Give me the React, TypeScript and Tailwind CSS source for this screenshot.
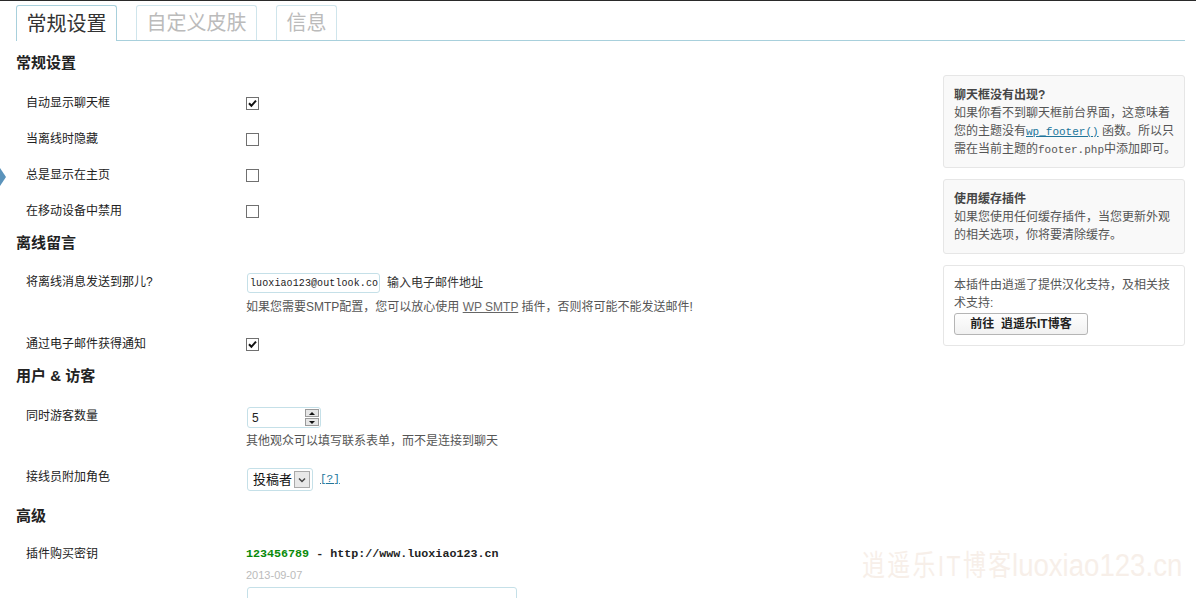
import React from "react";

const CJK = "font-['Liberation_Sans','Noto_Sans_CJK_SC',sans-serif]";
const MONO = "font-['Liberation_Mono','Noto_Sans_CJK_SC',monospace]";

function Checkbox({ checked }: { checked?: boolean }) {
  return (
    <svg width="13" height="13" viewBox="0 0 13 13" className="block">
      <rect x="0.5" y="0.5" width="12" height="12" fill="#fff" stroke="#707070" />
      {checked && (
        <path d="M3 6.3 L5.4 8.8 L10 3.6" fill="none" stroke="#111" strokeWidth="2" />
      )}
    </svg>
  );
}

function CheckRow({ label, checked }: { label: string; checked?: boolean }) {
  return (
    <div className="flex h-[36px] items-center">
      <div className="w-[230px] pl-[10px] text-[12px] leading-[20px] text-[#222]">{label}</div>
      <Checkbox checked={checked} />
    </div>
  );
}

function Heading({ children, h }: { children: React.ReactNode; h: string }) {
  return (
    <div className={`flex items-center ${h} text-[15px] font-bold text-[#222]`}>{children}</div>
  );
}

export default function App() {
  return (
    <div className={`relative h-[598px] w-[1196px] overflow-hidden bg-white ${CJK}`}>
      {/* top bar */}
      <div className="h-[1px] bg-[#2a2a2a]" />

      {/* admin menu arrow */}
      <div className="absolute left-0 top-[168px] h-0 w-0 border-y-[9px] border-l-[6px] border-y-transparent border-l-[#5b93bb]" />

      {/* tabs */}
      <div className="ml-[16px] mr-[11px] flex h-[40px] items-end gap-[19px] border-b border-[#a8d0dc] pt-[4px]">
        <div className="-mb-px flex h-[36px] w-[101px] items-center justify-center rounded-t-[3px] border border-b-0 border-[#a8d0dc] bg-white text-[20px] text-[#333]">
          常规设置
        </div>
        <div className="flex h-[35px] w-[121px] items-center justify-center rounded-t-[3px] border border-b-0 border-[#cfe5ec] text-[20px] text-[#bbb]">
          自定义皮肤
        </div>
        <div className="flex h-[35px] w-[61px] items-center justify-center rounded-t-[3px] border border-b-0 border-[#cfe5ec] text-[20px] text-[#bbb]">
          信息
        </div>
      </div>

      <div className="flex">
        {/* main */}
        <div className="flex-1 pl-[16px]">
          <Heading h="h-[44px]">常规设置</Heading>
          <CheckRow label="自动显示聊天框" checked />
          <CheckRow label="当离线时隐藏" />
          <CheckRow label="总是显示在主页" />
          <CheckRow label="在移动设备中禁用" />

          <Heading h="h-[28px]">离线留言</Heading>
          <div className="flex h-[69px]">
            <div className="w-[230px] pl-[10px] pt-[15px] text-[12px] leading-[20px] text-[#222]">
              将离线消息发送到那儿?
            </div>
            <div className="pt-[16px]">
              <div className="flex items-center">
                <div className="ml-px flex h-[20px] w-[133px] items-center overflow-hidden rounded-[3px] border border-[#c5e0e8] pl-[2px]">
                  <span className={`${MONO} whitespace-nowrap text-[10px] tracking-[0.1px] text-[#222]`}>luoxiao123@outlook.co</span>
                </div>
                <span className="ml-[7px] text-[12px] text-[#333]">输入电子邮件地址</span>
              </div>
              <div className="mt-[4px] whitespace-nowrap text-[12px] leading-[20px] text-[#555]">
                如果您需要SMTP配置，您可以放心使用 <span className="underline text-[#666]">WP SMTP</span> 插件，否则将可能不能发送邮件!
              </div>
            </div>
          </div>
          <CheckRow label="通过电子邮件获得通知" checked />

          <Heading h="h-[28px]">用户 &amp; 访客</Heading>
          <div className="flex h-[69px]">
            <div className="w-[230px] pl-[10px] pt-[16px] text-[12px] leading-[20px] text-[#222]">同时游客数量</div>
            <div className="pt-[17px]">
              <div className="ml-px flex h-[21px] w-[74px] items-center justify-between rounded-[3px] border border-[#c5e0e8] pl-[4px] pr-[1px]">
                <span className="text-[12px] text-[#222]">5</span>
                <div className="flex flex-col gap-px">
                  <div className="flex h-[8px] w-[14px] items-center justify-center border border-[#9a9a9a] bg-[#e6e6e6]">
                    <div className="h-0 w-0 border-x-[3px] border-b-[3px] border-x-transparent border-b-[#111]" />
                  </div>
                  <div className="flex h-[8px] w-[14px] items-center justify-center border border-[#9a9a9a] bg-[#e6e6e6]">
                    <div className="h-0 w-0 border-x-[3px] border-t-[3px] border-x-transparent border-t-[#111]" />
                  </div>
                </div>
              </div>
              <div className="mt-[3px] whitespace-nowrap text-[12px] leading-[20px] text-[#555]">
                其他观众可以填写联系表单，而不是连接到聊天
              </div>
            </div>
          </div>

          <div className="flex h-[36px]">
            <div className="w-[230px] pl-[10px] pt-[8px] text-[12px] leading-[20px] text-[#222]">接线员附加角色</div>
            <div className="flex items-start pt-[9px]">
              <div className="ml-px flex h-[23px] w-[66px] items-center justify-between rounded-[3px] border border-[#c5e0e8] pl-[5px] pr-[2px]">
                <span className="text-[13px] text-[#111]">投稿者</span>
                <div className="flex h-[17px] w-[16px] items-center justify-center border border-[#a9a9a9] bg-[#e8e8e8]">
                  <svg width="8" height="6" viewBox="0 0 8 6">
                    <path d="M1 1.5 L4 4.5 L7 1.5" fill="none" stroke="#444" strokeWidth="1.5" />
                  </svg>
                </div>
              </div>
              <span className={`${MONO} ml-[7px] mt-[3px] text-[11px] text-[#21759b] underline`}>[?]</span>
            </div>
          </div>

          <Heading h="h-[42px]">高级</Heading>
          <div className="flex">
            <div className="w-[230px] pl-[10px] pt-[7px] text-[12px] leading-[20px] text-[#222]">插件购买密钥</div>
            <div className="pt-[8px]">
              <div className={`${MONO} whitespace-nowrap text-[11.7px] font-bold leading-[18px] text-[#222]`}>
                <span className="text-[#0a8a0a]">123456789</span> - http://www.luoxiao123.cn
              </div>
              <div className="mt-[4px] text-[11px] leading-[16px] text-[#bbb]">2013-09-07</div>
              <div className="mt-[4px] ml-px h-[60px] w-[270px] rounded-[3px] border border-[#c5e0e8]" />
            </div>
          </div>
        </div>

        {/* sidebar */}
        <div className="mr-[11px] mt-[34px] flex w-[242px] flex-col gap-[11px]">
          <div className="rounded-[3px] border border-[#e6e6e6] bg-[#f9f9f9] px-[10px] pb-[9px] pt-[10px] text-[12px] leading-[18px] text-[#555]">
            <div className="h-[18px] font-bold text-[#464646]">聊天框没有出现?</div>
            <div className="h-[18px] whitespace-nowrap">如果你看不到聊天框前台界面，这意味着</div>
            <div className="h-[18px] whitespace-nowrap">
              您的主题没有<span className={`${MONO} text-[11px] leading-[18px] text-[#21759b] underline`}>wp_footer()</span> 函数。所以只
            </div>
            <div className="h-[18px] whitespace-nowrap">
              需在当前主题的<span className={`${MONO} text-[11px] leading-[18px]`}>footer.php</span>中添加即可。
            </div>
          </div>
          <div className="rounded-[3px] border border-[#e6e6e6] bg-[#f9f9f9] px-[10px] pb-[9px] pt-[10px] text-[12px] leading-[18px] text-[#555]">
            <div className="h-[18px] font-bold text-[#464646]">使用缓存插件</div>
            <div className="h-[18px] whitespace-nowrap">如果您使用任何缓存插件，当您更新外观</div>
            <div className="h-[18px] whitespace-nowrap">的相关选项，你将要清除缓存。</div>
          </div>
          <div className="rounded-[3px] border border-[#e6e6e6] bg-white px-[10px] pb-[10px] pt-[10px] text-[12px] leading-[18px] text-[#555]">
            <div className="h-[18px] whitespace-nowrap">本插件由逍遥了提供汉化支持，及相关技</div>
            <div className="h-[18px]">术支持:</div>
            <div className="mt-px flex h-[22px] w-[134px] items-center justify-center rounded-[3px] border border-[#b5b5b5] bg-gradient-to-b from-[#fefefe] to-[#f1f1f1] text-[12px] font-bold text-[#222]">
              前往&nbsp;&nbsp;逍遥乐IT博客
            </div>
          </div>
        </div>
      </div>

      {/* watermark */}
      <div className="pointer-events-none absolute bottom-[9px] right-[13px] flex items-baseline whitespace-nowrap text-[#f7efe9]">
        <div className="w-[150px] overflow-visible">
          <span className="inline-block origin-left text-[29px] tracking-[3px] [transform:scaleX(0.79)]">逍遥乐IT博客</span>
        </div>
        <div className="w-[171px] overflow-visible">
          <span className="inline-block origin-left text-[31px] [transform:scaleX(0.89)]">luoxiao123.cn</span>
        </div>
      </div>
    </div>
  );
}
